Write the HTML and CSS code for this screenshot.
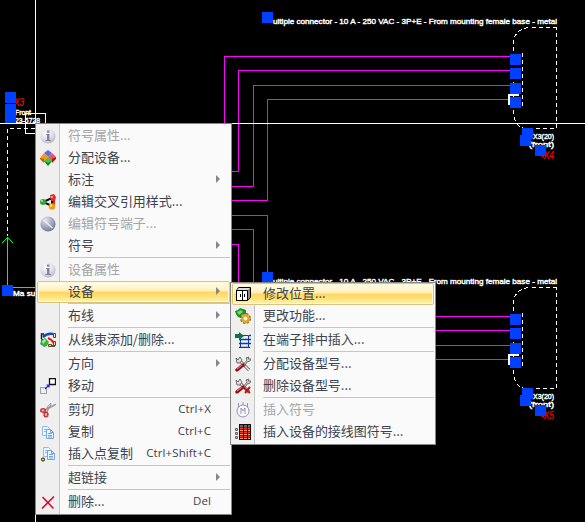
FILE: index.html
```html
<!DOCTYPE html>
<html lang="zh-CN">
<head>
<meta charset="utf-8">
<title>Schematic editor</title>
<link rel="stylesheet" href="styles.css">
</head>
<body>
<svg class="drawing" width="585" height="522" viewBox="0 0 585 522">
  <defs>
    <g id="connector">
      <path class="dash" d="M556.5 27.500H528.500Q513.500 29.500 513.500 44.500V112Q514 126 524 128.500H556.500V27.500"/>
      <path class="dash" d="M522.500 53V106" stroke-dasharray="2 4 1 8"/>
      <path d="M508 94h11v2h-9v9h-2z" fill="#fff"/>
      <g fill="#0040ff">
        <path d="M510 54h11v11h-11zM510 68h11v11h-11zM510 83h11v11h-11zM510 97h11v11h-11z"/>
      </g>
      <text class="note" x="533" y="139" textLength="21" lengthAdjust="spacingAndGlyphs">X3(20)</text>
      <text class="note" x="529" y="146.500" textLength="25" lengthAdjust="spacingAndGlyphs">(front)</text>
      <path fill="#0040ff" d="M522 128h11v11h-11zM520 135h11v11h-11z"/>
    </g>
  </defs>
  <g class="wire">
    <path d="M224.500 130V56.500H511M230 171.500H238.500V70.500H511M230 186.500H253.500V85.500H511M230 200.500H267.500V99.500H509"/>
    <path d="M230 215.500H267.500V273M230 229.500H253.500V285M230 244.500H238.500V285"/>
    <path d="M434 316.500H511M434 330.500H511M434 345.500H511M434 359.500H509"/>
  </g>
  <text class="title" x="273" y="23.500" textLength="284" lengthAdjust="spacingAndGlyphs">ultiple connector - 10 A - 250 VAC - 3P+E - From mounting female base - metal</text>
  <text class="title" x="273" y="283.500" textLength="284" lengthAdjust="spacingAndGlyphs">ultiple connector - 10 A - 250 VAC - 3P+E - From mounting female base - metal</text>
  <path fill="#0040ff" d="M262 12h11v11h-11zM262 272h11v11h-11z"/>
  <use href="#connector"/>
  <use href="#connector" y="260"/>
  <text class="tag" x="541" y="159" textLength="13" lengthAdjust="spacingAndGlyphs">-X4</text>
  <text class="tag" x="541" y="419" textLength="13" lengthAdjust="spacingAndGlyphs">-X5</text>
  <path fill="#0040ff" d="M535 145h11v11h-11zM535 405h11v11h-11z"/>
  <text class="tag" x="14" y="106" textLength="10" lengthAdjust="spacingAndGlyphs">X3</text>
  <text class="note" x="15" y="115" textLength="16" lengthAdjust="spacingAndGlyphs">Front</text>
  <text class="note" x="15" y="123" textLength="25" lengthAdjust="spacingAndGlyphs">23-5728</text>
  <path fill="#0040ff" d="M5 92h11v11H5zM5 104h11v19H5z"/>
  <path class="dash" d="M35 128.500H7.500V236"/>
  <path class="green" d="M7.500 286V237.500M2 243L7.500 237.500L13 243M12 287.500H35"/>
  <text class="note" x="13" y="296" textLength="25" lengthAdjust="spacingAndGlyphs">Ma sur</text>
  <path fill="#0040ff" d="M2 285h11v11H2z"/>
  <path class="cross" d="M0 123.500H585M35.500 0V522M25.500 113.500h20v20h-20z"/>
</svg>

<svg class="symbols" width="0" height="0">
  <defs>
    <radialGradient id="ball" cx=".4" cy=".3" r=".75"><stop offset="0" stop-color="#fff"/><stop offset=".6" stop-color="#dcdce8"/><stop offset="1" stop-color="#b4b4c4"/></radialGradient>
    <radialGradient id="darkball" cx=".35" cy=".25" r=".8"><stop offset="0" stop-color="#e4e4f0"/><stop offset=".6" stop-color="#a0a0b8"/><stop offset="1" stop-color="#74748e"/></radialGradient>
    <symbol id="info" viewBox="0 0 16 16"><circle cx="8" cy="8" r="7.600" fill="url(#ball)"/><path d="M7 2.500h2.500v2.200H7zM6 6h3.500v6H11v1H5.500v-1H7V7H6z" fill="#85859a"/></symbol>
    <symbol id="copy" viewBox="0 0 16 16"><path d="M2.500 2.500h5l2 2v7h-7z" fill="#eef6ff" stroke="#93bce8"/><path d="M4 5.500h3M4 7.500h3" stroke="#8db8ec"/><path d="M6.500 5.500h4l3 3v6h-7z" fill="#edf6ff" stroke="#77a6dc"/><path d="M10.500 5.500v3h3M8 9.500h4M8 11.500h4M8 13h4" fill="none" stroke="#6ea6e4"/></symbol>
    <symbol id="tools" viewBox="0 0 16 16"><path d="M4 4l10 10" stroke="#555" stroke-width="3"/><path d="M4 4l10 10" stroke="#eee" stroke-width="1.500"/><path d="M1 2l2 2 2-3 2 3-2 3-3 0z" fill="#ddd" stroke="#555" stroke-width=".8"/><path d="M8 9l4-5-1-2 3-1-1 2 3 0-1 2-3 1-3 5z" fill="#ddd" stroke="#555" stroke-width=".8"/><path d="M8 9l-6 5" stroke="#8f1018" stroke-width="3.400" stroke-linecap="round"/><path d="M7 9l-5 4" stroke="#f06060" stroke-width="1.300"/></symbol>
  </defs>
</svg>

<nav class="menu main-menu">
  <div class="item off"><svg class="icon"><use href="#info"/></svg><span class="label">符号属性...</span></div>
  <div class="item"><svg class="icon" viewBox="0 0 16 16"><path d="M8 0l4 3-4 4-4-4z" fill="#5a6ce8"/><path d="M4 3l4 4-4 5-4-4z" fill="#ff9808"/><path d="M0 8l4 1v4l-4-4z" fill="#c85800"/><path d="M12 3l4 4-4 5-4-5z" fill="#f05058"/><path d="M12 9l4-2v2l-4 4z" fill="#a81820"/><path d="M8 7l4 4-4 4-4-4z" fill="#3cc83c"/><path d="M4 11l4 2 4-2-4 5z" fill="#108018"/></svg><span class="label">分配设备...</span></div>
  <div class="item"><span class="icon"></span><span class="label">标注</span><i class="arrow"></i></div>
  <div class="item"><svg class="icon" viewBox="0 0 16 16"><path d="M3 8l9-4v8z" fill="none" stroke="#111" stroke-width="2"/><circle cx="3" cy="8" r="3" fill="#28a830"/><circle cx="2" cy="7" r="1" fill="#a0f090"/><path d="M10 1l4-1 2 3-1 4-4 0z" fill="#e02c28"/><circle cx="12" cy="3" r="1" fill="#ffb0a0"/><path d="M13 6h2v5h-2z" fill="#e02020"/><circle cx="12" cy="12.500" r="3.200" fill="#f49a08"/><circle cx="11" cy="11.500" r="1.200" fill="#ffe050"/></svg><span class="label">编辑交叉引用样式...</span></div>
  <div class="item off"><svg class="icon" viewBox="0 0 16 16"><circle cx="8" cy="8" r="7.600" fill="url(#darkball)"/><path d="M3.500 4l9 8" stroke="#eeeef5" stroke-width="1.500"/></svg><span class="label">编辑符号端子...</span></div>
  <div class="item"><span class="icon"></span><span class="label">符号</span><i class="arrow"></i></div>
  <hr>
  <div class="item off"><svg class="icon"><use href="#info"/></svg><span class="label">设备属性</span></div>
  <div class="item hot"><span class="icon"></span><span class="label">设备</span><i class="arrow"></i></div>
  <hr>
  <div class="item"><span class="icon"></span><span class="label">布线</span><i class="arrow"></i></div>
  <hr>
  <div class="item"><svg class="icon" viewBox="0 0 16 16"><path d="M3 5q4-4 10-3" fill="none" stroke="#1848b0" stroke-width="2.500"/><path d="M8 6q3 1 6 5" fill="none" stroke="#e81818" stroke-width="2.200"/><path d="M4 2H1.500v5M2 7v3M10 12v2h5" fill="none" stroke="#222" stroke-width="1.500"/><path d="M13.500 1.500h2v4h-2zM13.500 9.500h2v4h-2zM8.500 12.500h3v2h-3z" fill="#ecd79a" stroke="#5d4925"/><path d="M1 9l4-3 4 4-2 4-3 1-4-3z" fill="#38b044"/><path d="M2 9l3-2 1 2-3 3z" fill="#a4e8a4"/></svg><span class="label">从线束添加/删除...</span></div>
  <hr>
  <div class="item"><span class="icon"></span><span class="label">方向</span><i class="arrow"></i></div>
  <div class="item"><svg class="icon" viewBox="0 0 16 16"><path d="M9.500 .5h6v6h-6z" fill="#fff" stroke="#111" stroke-width="1.300"/><path d="M.5 9.500h6v6h-6z" fill="none" stroke="#555" stroke-dasharray="1 1"/><path d="M5 11l4-4M6.500 7H9v2.500" fill="none" stroke="#2020e8" stroke-width="1.200"/></svg><span class="label">移动</span></div>
  <hr>
  <div class="item"><svg class="icon" viewBox="0 0 16 16"><path d="M5 8l10-4.500L16 2 9 5zM7 10l4-7V1L7 5z" fill="#ccd0d2" stroke="#888" stroke-width=".7"/><ellipse cx="3" cy="8.500" rx="2.300" ry="1.700" fill="#f2b0b0" stroke="#c5363c" stroke-width="1.500"/><ellipse cx="6" cy="12.500" rx="1.900" ry="2.300" fill="#f2b0b0" stroke="#c5363c" stroke-width="1.500"/></svg><span class="label">剪切</span><span class="key">Ctrl+X</span></div>
  <div class="item"><svg class="icon"><use href="#copy"/></svg><span class="label">复制</span><span class="key">Ctrl+C</span></div>
  <div class="item"><svg class="icon" viewBox="0 0 16 16"><use href="#copy" x="1" y="-1" width="16" height="16"/><circle cx="3" cy="13.500" r="1.600" fill="#ffd200" stroke="#222"/></svg><span class="label">插入点复制</span><span class="key">Ctrl+Shift+C</span></div>
  <hr>
  <div class="item"><span class="icon"></span><span class="label">超链接</span><i class="arrow"></i></div>
  <hr>
  <div class="item"><svg class="icon" viewBox="0 0 16 16"><path d="M3 3.500L13 14M13.500 3L2.500 14" stroke="#d01430" stroke-width="1.700" stroke-linecap="round"/></svg><span class="label">删除...</span><span class="key">Del</span></div>
</nav>

<nav class="menu sub-menu">
  <div class="item hot"><svg class="icon" viewBox="0 0 16 16"><path d="M1.500 4.500l2-3h12v10l-3 3h-11z" fill="#888" stroke="#000"/><path d="M1.500 4.500h11v10h-11z" fill="#fff" stroke="#000"/><path d="M2 4l2-2h11l-2 2z" fill="#ddd"/><path d="M7.500 5v9M5.500 8v3M9.500 8v3" stroke="#000"/></svg><span class="label">修改位置...</span></div>
  <div class="item"><svg class="icon" viewBox="0 0 16 16"><circle cx="10.500" cy="10.500" r="4" fill="none" stroke="#8e6510" stroke-width="3" stroke-dasharray="2 1.140"/><circle cx="10.500" cy="10.500" r="3.200" fill="none" stroke="#dda928" stroke-width="2.500"/><path d="M0 3l3-1 2-2 3 1 3 1v4l-4 0-1 4-3-1-2-3z" fill="#1c9028"/><path d="M2 4l4-2 2 2-4 3z" fill="#72dc68"/></svg><span class="label">更改功能...</span></div>
  <hr>
  <div class="item"><svg class="icon" viewBox="0 0 16 16"><path d="M5.500 3.500h8v12h-8z" fill="#e4efff" stroke="#14389c"/><path d="M4 7.500h12M4 11.500h12M4 15.500h11M14 3.500h2" stroke="#14389c" stroke-width="1.300"/><path d="M0 2h4V0l5 4-5 4V6H0z" fill="#087840"/></svg><span class="label">在端子排中插入...</span></div>
  <hr>
  <div class="item"><svg class="icon"><use href="#tools"/></svg><span class="label">分配设备型号...</span></div>
  <div class="item"><svg class="icon" viewBox="0 0 16 16"><use href="#tools" width="16" height="16"/><path d="M9 10l6 5M15 9l-5 6" stroke="#b91a10" stroke-width="2"/></svg><span class="label">删除设备型号...</span></div>
  <hr>
  <div class="item off"><svg class="icon" viewBox="0 0 16 16"><circle cx="8" cy="9" r="6" fill="#fafaff" stroke="#9292bd"/><path d="M3.500 1v4M8 0v3M12.500 1v4M6 12V6l2 3 2-3v6" fill="none" stroke="#9292bd"/></svg><span class="label">插入符号</span></div>
  <div class="item"><svg class="icon" viewBox="0 0 16 16"><path d="M4 0h12v16H4z" fill="#111"/><path d="M5 1h3v2H5zM9 1h3v2H9zM13 1h2v2h-2z" fill="#666"/><path d="M5 4.500h10M5 8.500h10M5 12.500h10" stroke="#f33424" stroke-width="2"/><path d="M5 6.500h10M5 10.500h10M5 14.500h10" stroke="#ff9470"/><path d="M8.500 3v13M12.500 3v13" stroke="#111"/><path d="M.5 4.500h2v2h-2zM.5 8.500h2v2h-2zM.5 12.500h2v2h-2z" fill="#bbb" stroke="#666"/></svg><span class="label">插入设备的接线图符号...</span></div>
</nav>
</body>
</html>
```

FILE: styles.css
```css
* { box-sizing: border-box; }
body {
  margin: 0;
  width: 585px;
  height: 522px;
  overflow: hidden;
  position: relative;
  background: #000;
  font-family: "Open Sans", "Noto Sans CJK SC", sans-serif;
}
.drawing { display: block; shape-rendering: crispEdges; }
.symbols { position: absolute; }
.wire path { fill: none; stroke: #f0f; }
.dash { fill: none; stroke: #fff; stroke-dasharray: 4 3; }
.cross { fill: none; stroke: #fff; }
.green { fill: none; stroke: #00ff20; }
.title, .note { font: 7.5px "Liberation Sans", sans-serif; fill: #fff; stroke: #fff; stroke-width: .4px; }
.note { font-size: 7px; }
.tag { font: italic 10px "Liberation Sans", sans-serif; fill: #f00; stroke: #f00; stroke-width: .2px; }

/* Popup menus float above the drawing */
.menu {
  position: absolute;
  border: 1px solid #868686;
  padding: 1px;
  background: linear-gradient(90deg, #efefef 23px, #c5c5c5 23px, #c5c5c5 24px, #fafafa 24px);
}
.main-menu { left: 35px; top: 123px; width: 197px; height: 392px; }
.sub-menu { left: 230px; top: 282px; width: 206px; height: 163px; padding-top: 0; }
.item {
  height: 22px;
  display: flex;
  align-items: center;
  padding: 0 0 2px 3px;
  color: #3c434e;
  font-size: 13px;
  line-height: 20px;
  white-space: nowrap;
}
.off { color: #a5a5a5; }
.icon { width: 16px; height: 16px; flex: none; margin-top: 1px; }
.label { margin-left: 12px; font-family: "Noto Sans CJK SC", sans-serif; letter-spacing: -.03px; }
.key { margin-left: auto; margin-right: 19px; font-size: 11.5px; letter-spacing: .1px; }
.arrow {
  margin-left: auto;
  margin-right: 10px;
  border: solid transparent;
  border-width: 4px 0 4px 4px;
  border-left-color: #868686;
}
.hot {
  border: 1px solid #d8c47c;
  border-radius: 2px;
  padding: 0 0 2px 2px;
  background: linear-gradient(#fffdf0, #ffefb8 45%, #ffd75a 50%, #ffe27c 75%, #fff4b4);
  box-shadow: inset 0 0 0 1px #fff8d4;
}
.hot .arrow { margin-right: 9px; }
hr { margin: 0 0 1px 31px; height: 1px; border: 0; background: #c5c5c5; }
```
